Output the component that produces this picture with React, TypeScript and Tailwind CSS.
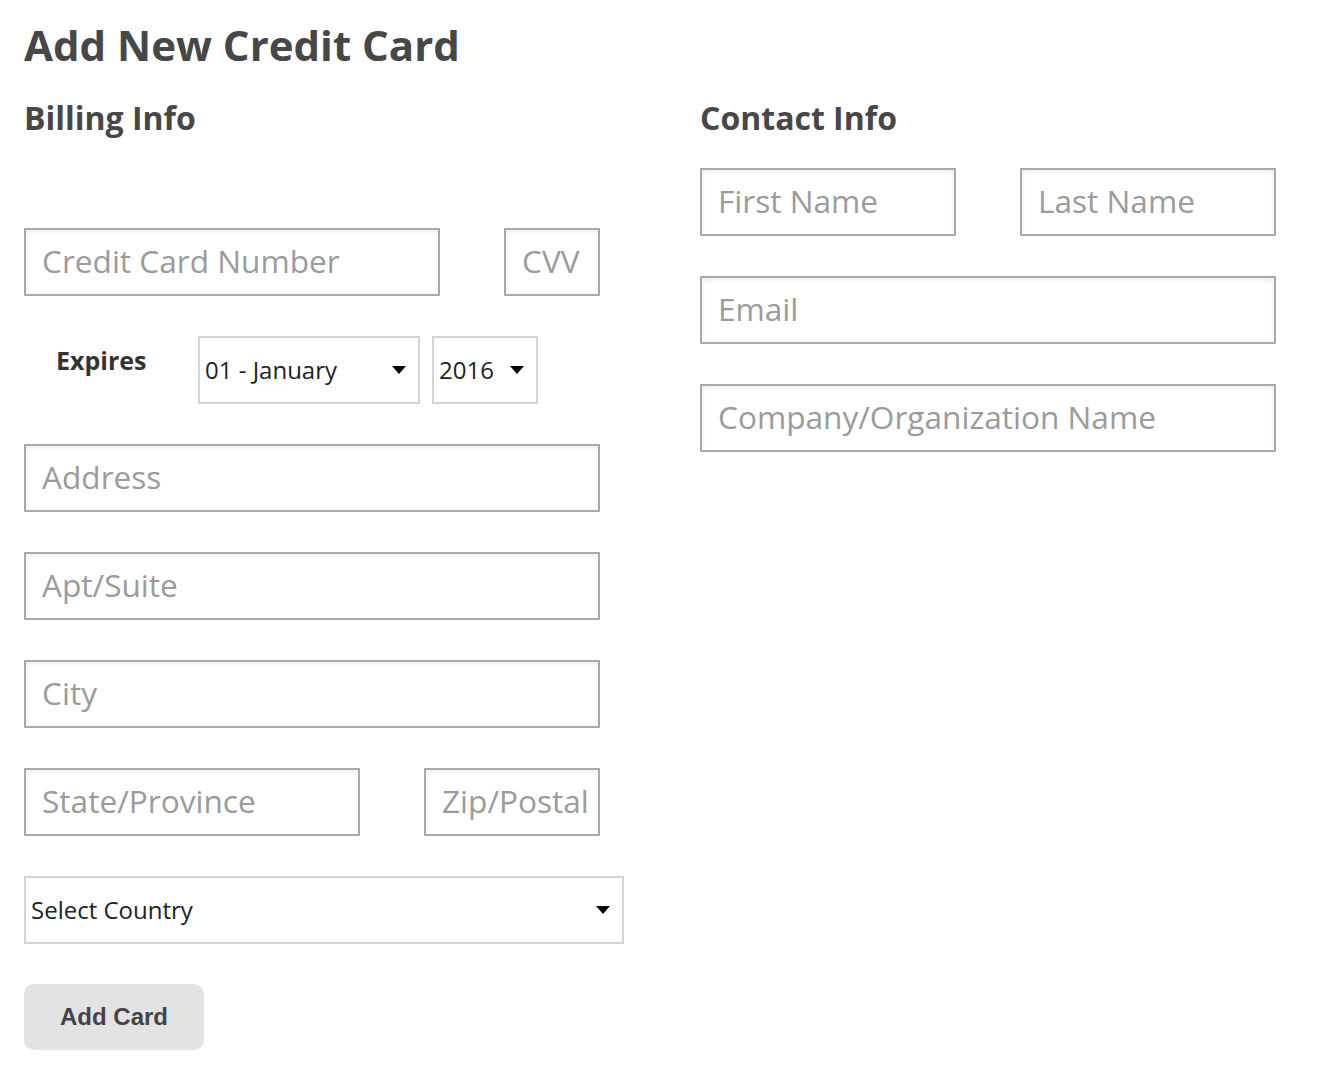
import React from "react";

const inputCls =
  "block h-[68px] border-2 border-[#a9a9a9] bg-white pl-[16px] pb-[3px] text-[31.6px] text-[#333] placeholder:text-[#9b9b9b] shadow-[inset_0_2px_4px_rgba(0,0,0,0.08)] outline-none";

function Arrow() {
  return (
    <svg width="14" height="8" viewBox="0 0 14 8" className="pointer-events-none absolute top-1/2 -translate-y-1/2 right-[14px]">
      <path d="M0 0 L14 0 L7 8 Z" fill="#000" />
    </svg>
  );
}

function Select({ w, children }: { w: string; children: React.ReactNode }) {
  return (
    <div className={`relative ${w} h-[68px]`}>
      <select className="block w-full h-full appearance-none border-2 border-[#d3d3d3] bg-white pl-[5px] pr-[30px] text-[24px] text-[#222] outline-none">
        {children}
      </select>
      <Arrow />
    </div>
  );
}

export default function App() {
  return (
    <div className="min-h-[1082px] bg-white pl-[24px] pt-[15px]" style={{ fontFamily: '"Open Sans", sans-serif' }}>
      <h1 className="text-[42px] font-bold leading-[60px] text-[#474747]">Add New Credit Card</h1>
      <div className="flex mt-[20px]">
        <div className="w-[676px]">
          <h2 className="text-[32px] font-bold leading-[46px] text-[#474747]">Billing Info</h2>
          <div className="mt-[87px] flex flex-col gap-[40px]">
            <div className="flex gap-[64px]">
              <input className={`${inputCls} w-[416px] pr-[16px]`} placeholder="Credit Card Number" />
              <input className={`${inputCls} w-[96px] pr-[4px]`} placeholder="CVV" />
            </div>
            <div className="flex items-center">
              <div className="w-[174px] pl-[32px] text-[25px] font-bold text-[#333] -mt-[18px]">Expires</div>
              <Select w="w-[222px]">
                <option>01 - January</option>
              </Select>
              <div className="w-[12px]" />
              <Select w="w-[106px]">
                <option>2016</option>
              </Select>
            </div>
            <input className={`${inputCls} w-[576px] pr-[16px]`} placeholder="Address" />
            <input className={`${inputCls} w-[576px] pr-[16px]`} placeholder="Apt/Suite" />
            <input className={`${inputCls} w-[576px] pr-[16px]`} placeholder="City" />
            <div className="flex gap-[64px]">
              <input className={`${inputCls} w-[336px] pr-[16px]`} placeholder="State/Province" />
              <input className={`${inputCls} w-[176px] pr-[2px]`} placeholder="Zip/Postal" />
            </div>
            <Select w="w-[600px]">
              <option>Select Country</option>
            </Select>
            <button className="w-[180px] h-[66px] rounded-[10px] bg-[#e3e3e3] text-[24px] font-bold text-[#444]" style={{ fontFamily: '"Liberation Sans", Arial, sans-serif' }}>
              Add Card
            </button>
          </div>
        </div>
        <div className="w-[576px]">
          <h2 className="text-[32px] font-bold leading-[46px] text-[#474747]">Contact Info</h2>
          <div className="mt-[27px] flex flex-col gap-[40px]">
            <div className="flex gap-[64px]">
              <input className={`${inputCls} w-[256px] pr-[16px]`} placeholder="First Name" />
              <input className={`${inputCls} w-[256px] pr-[16px]`} placeholder="Last Name" />
            </div>
            <input className={`${inputCls} w-[576px] pr-[16px]`} placeholder="Email" />
            <input className={`${inputCls} w-[576px] pr-[16px]`} placeholder="Company/Organization Name" />
          </div>
        </div>
      </div>
    </div>
  );
}
